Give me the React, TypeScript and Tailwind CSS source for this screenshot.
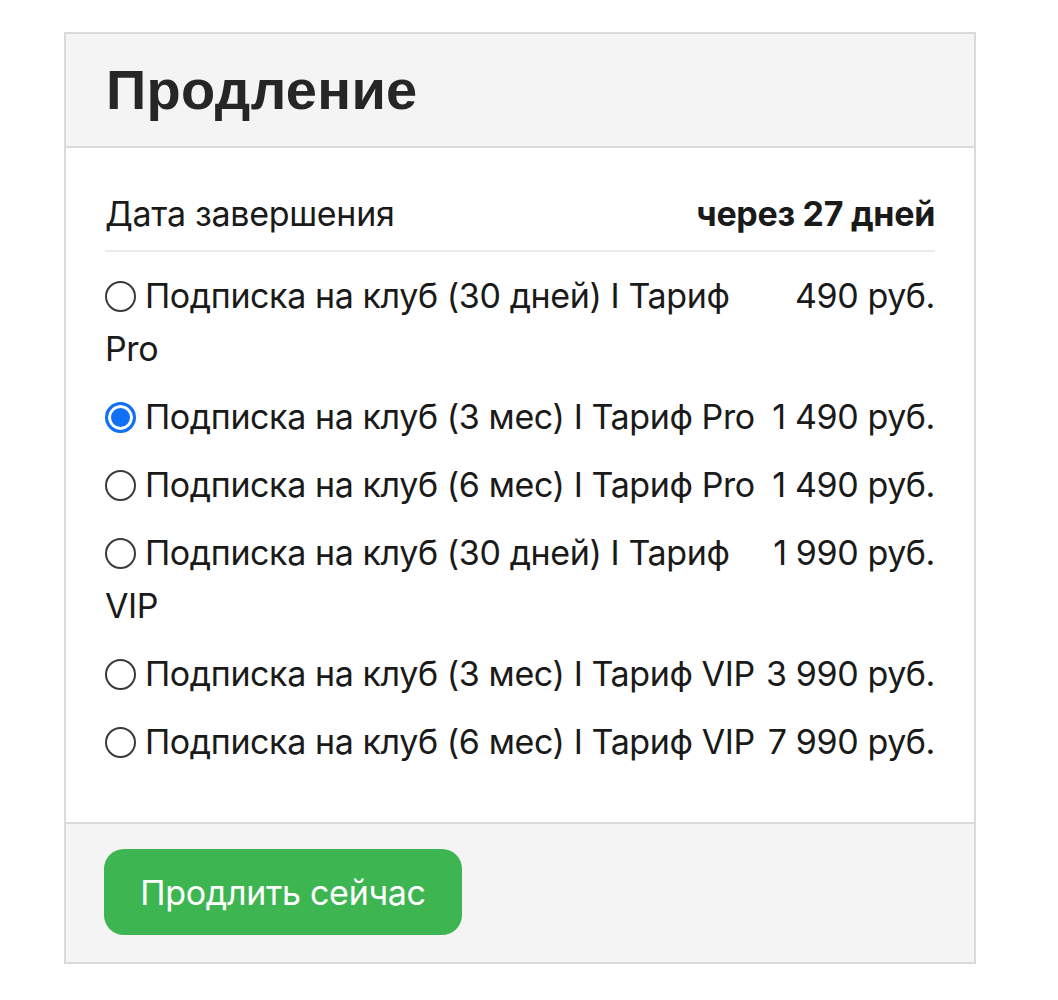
import React from "react";

const options = [
  { label: "Подписка на клуб (30 дней) I Тариф Pro", price: "490 руб.", selected: false },
  { label: "Подписка на клуб (3 мес) I Тариф Pro", price: "1 490 руб.", selected: true },
  { label: "Подписка на клуб (6 мес) I Тариф Pro", price: "1 490 руб.", selected: false },
  { label: "Подписка на клуб (30 дней) I Тариф VIP", price: "1 990 руб.", selected: false },
  { label: "Подписка на клуб (3 мес) I Тариф VIP", price: "3 990 руб.", selected: false },
  { label: "Подписка на клуб (6 мес) I Тариф VIP", price: "7 990 руб.", selected: false },
];

function Radio({ selected }: { selected: boolean }) {
  if (selected) {
    return (
      <span className="inline-block w-[31px] h-[31px] rounded-full border-[3px] border-[#1170f5] bg-[#1170f5] shadow-[inset_0_0_0_3px_white] align-[-4px] mr-[9px]" />
    );
  }
  return (
    <span className="inline-block w-[31px] h-[31px] rounded-full border-2 border-[#3a3a3a] bg-white align-[-4px] mr-[9px]" />
  );
}

export default function App() {
  return (
    <div className="bg-white min-h-[1000px] pt-[32px]" style={{ fontFamily: "Inter, 'Noto Sans', sans-serif" }}>
      <div className="ml-[64px] w-[912px] border-2 border-[#dadada] text-[#1a1a1a]">
        <div className="h-[114px] bg-[#f4f4f4] border-b-2 border-[#dadada] flex items-center px-[40px]">
          <h1
            className="text-[56px] font-bold text-[#262626] leading-none tracking-[0.3px]"
            style={{ fontFamily: "'Liberation Sans', Arial, sans-serif" }}
          >
            Продление
          </h1>
        </div>
        <div className="px-[39px] pt-[40px] pb-[54px]">
          <div className="flex justify-between items-center border-b-2 border-[#ececec] pb-[10px] text-[34px] leading-[52px] tracking-[-0.3px]">
            <span>Дата завершения</span>
            <span className="font-bold">через 27 дней</span>
          </div>
          <div className="mt-[17px] flex flex-col gap-[15px]">
            {options.map((o, i) => (
              <div key={i} className="flex gap-[8px] text-[34px] leading-[53px] tracking-[-0.4px]">
                <div className="flex-1 min-w-0">
                  <Radio selected={o.selected} />
                  {o.label}
                </div>
                <div className="shrink-0 text-right whitespace-nowrap">{o.price}</div>
              </div>
            ))}
          </div>
        </div>
        <div className="bg-[#f4f4f4] border-t-2 border-[#dadada] pl-[38px] pt-[25px] pb-[27px]">
          <button className="h-[86px] w-[358px] rounded-[20px] bg-[#3db652] text-white text-[34px] tracking-[-0.3px]">
            Продлить сейчас
          </button>
        </div>
      </div>
    </div>
  );
}
